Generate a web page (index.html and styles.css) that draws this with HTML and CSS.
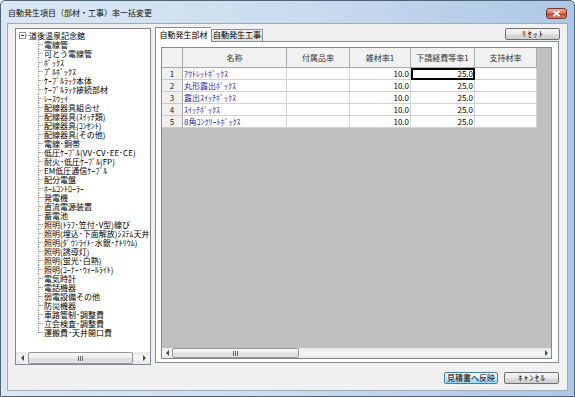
FILE: index.html
```html
<!DOCTYPE html>
<html lang="ja">
<head>
<meta charset="utf-8">
<title>自動発生項目（部材・工事）率一括変更</title>
<link rel="stylesheet" href="styles.css">
</head>
<body>
<div class="window">
  <div class="titlebar">
    <span class="title">自動発生項目（部材・工事）率一括変更</span>
    <span class="close"><svg width="9" height="7" viewBox="0 0 9 7"><path d="M1.5 1 L7.5 6 M7.5 1 L1.5 6" stroke="#fff" stroke-width="1.8" fill="none"/></svg></span>
  </div>
  <div class="client">
    <div class="main">
      <div class="tree">
        <div class="tree-view">
          <div class="root"><span class="expander"></span><span class="root-label">道後温泉記念館</span></div>
          <ul class="children">
            <li>電線管</li>
            <li>可とう電線管</li>
            <li>ﾎﾞｯｸｽ</li>
            <li>ﾌﾟﾙﾎﾞｯｸｽ</li>
            <li>ｹｰﾌﾞﾙﾗｯｸ本体</li>
            <li>ｹｰﾌﾞﾙﾗｯｸ接続部材</li>
            <li>ﾚｰｽｳｪｲ</li>
            <li>配線器具組合せ</li>
            <li>配線器具(ｽｲｯﾁ類)</li>
            <li>配線器具(ｺﾝｾﾝﾄ)</li>
            <li>配線器具(その他)</li>
            <li>電線･銅帯</li>
            <li>低圧ｹｰﾌﾞﾙ(VV･CV･EE･CE)</li>
            <li>耐火･低圧ｹｰﾌﾞﾙ(FP)</li>
            <li>EM低圧通信ｹｰﾌﾞﾙ</li>
            <li>配分電盤</li>
            <li>ﾎｰﾑｺﾝﾄﾛｰﾗｰ</li>
            <li>発電機</li>
            <li>直流電源装置</li>
            <li>蓄電池</li>
            <li>照明(ﾄﾗﾌ･笠付･V型)線び</li>
            <li>照明(埋込･下面解放)ｼｽﾃﾑ天井</li>
            <li>照明(ﾀﾞｳﾝﾗｲﾄ･水銀･ﾅﾄﾘｳﾑ)</li>
            <li>照明(誘導灯)</li>
            <li>照明(蛍光･白熱)</li>
            <li>照明(ｺｰﾅｰ･ｳｫｰﾙﾗｲﾄ)</li>
            <li>電気時計</li>
            <li>電話機器</li>
            <li>弱電設備その他</li>
            <li>防災機器</li>
            <li>車路管制･調整費</li>
            <li>立会検査･調整費</li>
            <li>運搬費･天井開口費</li>
          </ul>
        </div>
        <div class="hscroll tree-scroll">
          <span class="arrow left"></span>
          <span class="thumb tree-thumb"><span class="grip"></span></span>
          <span class="track"></span>
          <span class="arrow right"></span>
        </div>
      </div>
      <div class="right">
        <div class="tabstrip">
          <div class="tabs">
            <span class="tab active">自動発生部材</span>
            <span class="tab">自動発生工事</span>
          </div>
          <button class="btn reset kana">ﾘｾｯﾄ</button>
        </div>
        <div class="tabpage">
          <div class="grid">
            <div class="grid-body">
              <div class="table">
                <div class="hcell"></div>
                <div class="hcell">名称</div>
                <div class="hcell">付属品率</div>
                <div class="hcell">雑材率1</div>
                <div class="hcell">下請経費等率1</div>
                <div class="hcell">支持材率</div>

                <div class="rcell">1</div>
                <div class="cell name">ｱｳﾄﾚｯﾄﾎﾞｯｸｽ</div>
                <div class="cell num"></div>
                <div class="cell num">10.0</div>
                <div class="cell num focus">25.0</div>
                <div class="cell num"></div>

                <div class="rcell">2</div>
                <div class="cell name">丸形露出ﾎﾞｯｸｽ</div>
                <div class="cell num"></div>
                <div class="cell num">10.0</div>
                <div class="cell num">25.0</div>
                <div class="cell num"></div>

                <div class="rcell">3</div>
                <div class="cell name">露出ｽｲｯﾁﾎﾞｯｸｽ</div>
                <div class="cell num"></div>
                <div class="cell num">10.0</div>
                <div class="cell num">25.0</div>
                <div class="cell num"></div>

                <div class="rcell">4</div>
                <div class="cell name">ｽｲｯﾁﾎﾞｯｸｽ</div>
                <div class="cell num"></div>
                <div class="cell num">10.0</div>
                <div class="cell num">25.0</div>
                <div class="cell num"></div>

                <div class="rcell">5</div>
                <div class="cell name">8角ｺﾝｸﾘｰﾄﾎﾞｯｸｽ</div>
                <div class="cell num"></div>
                <div class="cell num">10.0</div>
                <div class="cell num">25.0</div>
                <div class="cell num"></div>
              </div>
            </div>
            <div class="hscroll grid-scroll">
              <span class="arrow left"></span>
              <span class="thumb grid-thumb"><span class="grip"></span></span>
              <span class="track"></span>
              <span class="arrow right"></span>
            </div>
          </div>
        </div>
      </div>
    </div>
    <div class="footer">
      <button class="btn default apply">見積書へ反映</button>
      <button class="btn cancel kana">ｷｬﾝｾﾙ</button>
    </div>
  </div>
</div>
</body>
</html>
```

FILE: styles.css
```css
* { box-sizing: border-box; }
html, body { margin: 0; padding: 0; }
body {
  width: 575px;
  height: 397px;
  overflow: hidden;
  background: #fff;
  font-family: "Noto Sans CJK JP", "Noto Sans", sans-serif;
  font-size: 8px;
  color: #000;
}

.window {
  width: 575px;
  height: 397px;
  border: 1px solid #4f6378;
  border-radius: 5px 5px 0 0;
  background: linear-gradient(to right, #dce7f3 0%, #cbdcef 50%, #adc7e5 100%);
  padding: 0 6px 5px 6px;
  display: flex;
  flex-direction: column;
}

.titlebar {
  height: 22px;
  display: flex;
  justify-content: space-between;
  align-items: flex-start;
}
.title {
  margin: 7px 0 0 1px;
  font-size: 8px;
  line-height: 10px;
  color: #111;
}
.close {
  margin: 7px 1px 0 0;
  width: 21px;
  height: 11px;
  border: 1px solid #7a3326;
  border-radius: 3px;
  background: linear-gradient(#eab0a2 0%, #d8785f 45%, #c0432b 55%, #d9846c 100%);
  display: flex;
  align-items: center;
  justify-content: center;
}

.client {
  flex: 1;
  background: #f0f0f0;
  border: 1px solid #9aabbf;
  display: flex;
  flex-direction: column;
  padding: 4px 0 6px 0;
}

.main {
  display: flex;
  gap: 4px;
  padding: 0 7px;
  height: 337px;
}

/* tree */
.tree {
  width: 136px;
  height: 337px;
  border: 1px solid #828790;
  background: #fff;
  display: flex;
  flex-direction: column;
  overflow: hidden;
}
.tree-view {
  flex: 1;
  overflow: hidden;
  white-space: nowrap;
  padding: 2px 0 0 3px;
  line-height: 9px;
}
.root {
  display: flex;
  align-items: center;
  height: 9px;
}
.expander {
  position: relative;
  width: 7px;
  height: 7px;
  border: 1px solid #919191;
  background: #fff;
  margin-right: 3px;
  flex: none;
}
.expander::before {
  content: "";
  position: absolute;
  left: 1px;
  right: 1px;
  top: 2px;
  height: 1px;
  background: #333;
}
.expander::after {
  content: "";
  position: absolute;
  left: 6px;
  top: 2px;
  width: 3px;
  border-top: 1px dotted #a0a0a0;
}
.children {
  list-style: none;
  margin: 0 0 0 19px;
  padding: 0;
}
.children li {
  position: relative;
  height: 9px;
  padding-left: 6px;
}
.children li::before {
  content: "";
  position: absolute;
  left: 0;
  top: 0;
  bottom: 0;
  border-left: 1px dotted #a0a0a0;
}
.children li:last-child::before { bottom: 4px; }
.children li::after {
  content: "";
  position: absolute;
  left: 1px;
  top: 4px;
  width: 4px;
  border-top: 1px dotted #a0a0a0;
}

/* scrollbars */
.hscroll {
  display: flex;
  background: linear-gradient(#e6e6e6, #f3f3f3 40%, #f3f3f3 60%, #e8e8e8);
  flex: none;
}
.tree-scroll { height: 12px; }
.grid-scroll { height: 10px; }
.arrow {
  flex: none;
  display: flex;
  align-items: center;
  justify-content: center;
}
.tree-scroll .arrow { width: 12px; }
.grid-scroll .arrow { width: 10px; }
.arrow.left::before {
  content: "";
  border-right: 3px solid #4a4a4a;
  border-top: 3px solid transparent;
  border-bottom: 3px solid transparent;
}
.arrow.right::before {
  content: "";
  border-left: 3px solid #4a4a4a;
  border-top: 3px solid transparent;
  border-bottom: 3px solid transparent;
}
.thumb {
  flex: none;
  border: 1px solid #979797;
  border-radius: 2px;
  background: linear-gradient(#f7f7f7, #ececec 50%, #dcdcdc 50%, #e4e4e4);
  display: flex;
  align-items: center;
  justify-content: center;
}
.tree-thumb { width: 105px; }
.grid-thumb { width: 127px; }
.track { flex: 1; }
.grip {
  width: 5px;
  height: 5px;
  background: repeating-linear-gradient(to right, #6a6a6a 0 1px, transparent 1px 2px);
}

/* right side */
.right {
  width: 405px;
  display: flex;
  flex-direction: column;
}
.tabstrip {
  height: 13px;
  display: flex;
  justify-content: space-between;
  align-items: flex-end;
}
.tabs {
  display: flex;
  align-items: flex-end;
  height: 13px;
}
.tab {
  height: 12px;
  width: 52px;
  border: 1px solid #898c95;
  border-bottom: none;
  background: linear-gradient(#f3f3f3, #e9e9e9 50%, #dcdcdc 50%, #e2e2e2);
  line-height: 10px;
  text-align: center;
}
.tab.active {
  position: relative;
  z-index: 1;
  width: 56px;
  height: 15px;
  margin-bottom: -1px;
  background: #fff;
  line-height: 13px;
  border-right: none;
}
.tabpage {
  height: 322px;
  margin-right: 1px;
  border: 1px solid #898c95;
  background: #fff;
  padding: 5px 6px 3px 5px;
}

/* buttons */
.btn {
  height: 12px;
  padding: 0;
  border: 1px solid #707070;
  border-radius: 2px;
  background: linear-gradient(#f2f2f2 0%, #ebebeb 50%, #dddddd 50%, #cfcfcf 100%);
  font-family: "Noto Sans CJK JP", "Noto Sans", sans-serif;
  font-size: 8px;
  line-height: 10px;
  color: #000;
}
.btn.kana {
  letter-spacing: 1.6px;
  text-indent: 1.6px;
}
.reset {
  align-self: flex-start;
  width: 55px;
}
.btn.default {
  border-color: #3c7fb1;
  background: linear-gradient(#eaf6fd 0%, #d9f0fc 50%, #bee6fd 50%, #a7d9f5 100%);
}
.apply { width: 54px; }
.cancel { width: 55px; }

/* grid */
.grid {
  height: 312px;
  border: 1px solid #828790;
  display: flex;
  flex-direction: column;
}
.grid-body {
  flex: 1;
  background: #bfbfbf;
}
.table {
  display: grid;
  grid-template-columns: 21px 104px 63px 61px 64px 62px;
  grid-template-rows: 20px repeat(5, 12px);
  width: 375px;
}
.hcell {
  background: #f1f1f1;
  border-right: 1px solid #a9a9a9;
  border-bottom: 1px solid #a9a9a9;
  display: flex;
  align-items: center;
  justify-content: center;
  color: #333;
  line-height: 10px;
}
.rcell {
  background: #f0f0f0;
  border-right: 1px solid #a9a9a9;
  border-bottom: 1px solid #c8c8c8;
  text-align: center;
  line-height: 11px;
  color: #222;
}
.cell {
  background: #fff;
  border-right: 1px solid #d3d3d3;
  border-bottom: 1px solid #d3d3d3;
  line-height: 11px;
  white-space: nowrap;
  overflow: hidden;
}
.cell.name {
  color: #1f1fb0;
  padding-left: 1px;
}
.cell.num {
  text-align: right;
  padding-right: 1px;
}
.cell.focus {
  outline: 2px solid #000;
  outline-offset: -2px;
}

/* footer */
.footer {
  display: flex;
  justify-content: flex-end;
  gap: 6px;
  margin-top: 7px;
  padding-right: 8px;
}
```
